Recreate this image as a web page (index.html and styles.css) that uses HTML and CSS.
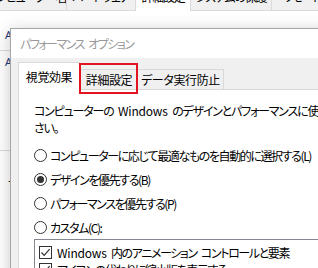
FILE: index.html
```html
<!DOCTYPE html>
<html lang="ja">
<head>
<meta charset="utf-8">
<link rel="stylesheet" href="styles.css">
</head>
<body>
<div class="screen">
  <div class="parent">
    <div class="ptabs">
      <div class="ptab first">コンピューター名</div>
      <div class="ptab hw">ハードウェア</div>
      <div class="ptab active">詳細設定</div>
      <div class="ptab sys">システムの保護</div>
      <div class="ptab remote">リモート</div>
    </div>
    <div class="pbody">
      <div class="plabel a1">A</div>
      <div class="pline l1"></div>
      <div class="plabel a2">A</div>
      <div class="pline l2"></div>
      <div class="pdash">-</div>
    </div>
  </div>

  <div class="dialog">
    <div class="titlebar">パフォーマンス オプション</div>
    <div class="dbody">
      <div class="tabs">
        <div class="tab active">視覚効果</div>
        <div class="tab t2">詳細設定</div>
        <div class="tab t3">データ実行防止</div>
      </div>
      <div class="panel">
        <p class="desc">コンピューターの <span class="lat">Windows</span> のデザインとパフォーマンスに使う設定を選択してくだ<br>さい。</p>
        <div class="radio"><span class="rb"></span><span>コンピューターに応じて最適なものを自動的に選択する(L)</span></div>
        <div class="radio"><span class="rb on"></span><span>デザインを優先する(B)</span></div>
        <div class="radio"><span class="rb"></span><span>パフォーマンスを優先する(P)</span></div>
        <div class="radio"><span class="rb"></span><span>カスタム(C):</span></div>
        <div class="list">
          <div class="item"><span class="cb"><svg width="11" height="11" viewBox="0 0 11 11"><polyline points="1.5,5.5 4.2,8.3 9.6,2.2" fill="none" stroke="#333" stroke-width="1.2"/></svg></span><span><span class="lat">Windows</span> 内のアニメーション コントロールと要素</span></div>
          <div class="item"><span class="cb"><svg width="11" height="11" viewBox="0 0 11 11"><polyline points="1.5,5.5 4.2,8.3 9.6,2.2" fill="none" stroke="#333" stroke-width="1.2"/></svg></span><span>アイコンの代わりに縮小版を表示する</span></div>
        </div>
      </div>
    </div>
  </div>

  <div class="highlight"></div>
</div>
</body>
</html>
```

FILE: styles.css
```css
* { box-sizing: border-box; }
html, body { margin: 0; padding: 0; }
body {
  width: 318px;
  height: 268px;
  overflow: hidden;
  background: #fff;
  font-family: "Noto Sans CJK JP", "Noto Sans", sans-serif;
  font-size: 12px;
  font-feature-settings: "palt";
  letter-spacing: -1.2px;
  word-spacing: 3px;
  color: #000;
}
.lat { letter-spacing: -0.2px; }
.screen {
  position: relative;
  width: 318px;
  height: 268px;
  overflow: hidden;
}

/* parent window */
.ptabs {
  display: flex;
  margin-top: -12px;
  margin-left: -14px;
  height: 23px;
  border-bottom: 1px solid #d9d9d9;
}
.ptab {
  height: 22px;
  padding-top: 1px;
  line-height: 16px;
  text-align: center;
  background: #f0f0f0;
  border-right: 1px solid #d9d9d9;
  white-space: nowrap;
  overflow: hidden;
  flex: none;
}
.ptab.first { width: 81px; }
.ptab.hw { width: 69px; }
.ptab.active { width: 55px; background: #fff; height: 23px; }
.ptab.sys { width: 81px; }
.ptab.remote { width: 60px; }

.pbody { padding-left: 5px; }
.plabel {
  line-height: 14px;
  height: 14px;
  color: #1f3a7a;
  font-family: "Noto Sans", sans-serif;
  font-size: 11px;
  letter-spacing: 0;
}
.a1 { margin-top: 17px; }
.a2 { margin-top: 4px; }
.pline {
  height: 1px;
  background: #dcdcdc;
  margin-left: -5px;
  width: 120px;
}
.l1 { margin-top: 8px; }
.l2 { margin-top: 81px; }
.pdash { margin-top: 22px; padding-left: 3px; line-height: 14px; }

/* dialog window */
.dialog {
  position: absolute;
  left: 10px;
  top: 28px;
  width: 420px;
  height: 320px;
  border: 1px solid #a6a6a6;
  background: #f0f0f0;
  box-shadow: 0 3px 16px rgba(0, 0, 0, 0.22);
}
.titlebar {
  height: 29px;
  background: #fff;
  color: #999;
  padding-left: 9px;
  line-height: 29px;
  letter-spacing: -1.5px;
}
.dbody {
  padding: 4px 0 0 7px;
}
.tabs {
  display: flex;
  align-items: flex-end;
  height: 28px;
  position: relative;
  z-index: 1;
}
.tab {
  flex: none;
  height: 20px;
  margin-bottom: 1px;
  border: 1px solid #d9d9d9;
  border-bottom: none;
  background: #f0f0f0;
  line-height: 17px;
  padding-top: 1px;
  text-align: center;
  white-space: nowrap;
  letter-spacing: -0.4px;
}
.tab.active {
  width: 62px;
  height: 28px;
  margin-bottom: 0;
  background: #fff;
  padding-top: 5px;
}
.tab.t2 { width: 58px; border-left: 1px solid #d9d9d9; }
.tab.t3 { width: 87px; margin-left: -1px; }

.panel {
  margin-top: -1px;
  border: 1px solid #d9d9d9;
  background: #fff;
  height: 260px;
  padding: 12px 0 0 15px;
}
.desc {
  margin: 0;
  line-height: 17px;
  white-space: nowrap;
}
.radio {
  display: flex;
  align-items: center;
  height: 24px;
  white-space: nowrap;
  letter-spacing: -1.4px;
}
.desc + .radio { margin-top: 7px; }
.rb {
  flex: none;
  width: 13px;
  height: 13px;
  border: 1px solid #333;
  border-radius: 50%;
  margin-right: 3px;
  display: flex;
  align-items: center;
  justify-content: center;
}
.rb.on::after {
  content: "";
  width: 7px;
  height: 7px;
  border-radius: 50%;
  background: #333;
}
.list {
  border: 1px solid #828790;
  border-right: none;
  padding: 4px 0 0 4px;
  height: 80px;
}
.item {
  display: flex;
  align-items: center;
  height: 17px;
  white-space: nowrap;
  letter-spacing: -1.4px;
}
.cb {
  flex: none;
  width: 13px;
  height: 13px;
  border: 1px solid #333;
  margin-right: 5px;
  display: flex;
}

/* annotation */
.highlight {
  position: absolute;
  left: 79px;
  top: 63px;
  width: 59px;
  height: 31px;
  border: 2px solid #e2141f;
  z-index: 5;
}
```
